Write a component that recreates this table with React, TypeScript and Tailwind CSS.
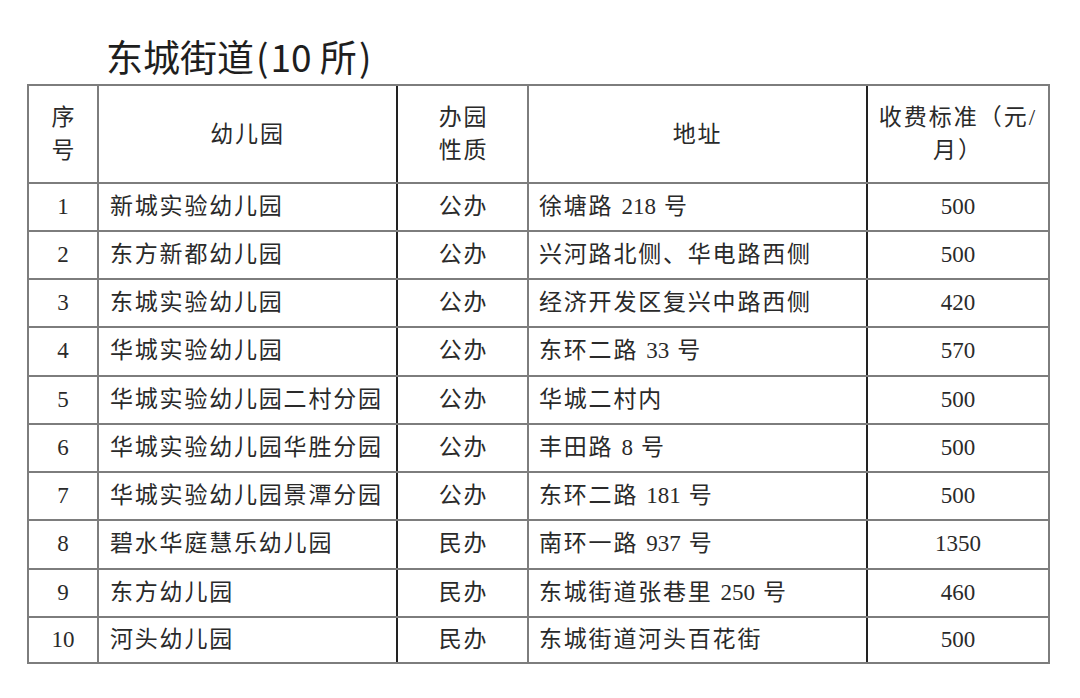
import React from "react";

type Row = { n: string; name: string; kind: string; addr: React.ReactNode; fee: string; h: string };

const D = ({ children }: { children: React.ReactNode }) => (
  <span className="tracking-normal mx-[8px]">{children}</span>
);

const rows: Row[] = [
  { n: "1", name: "新城实验幼儿园", kind: "公办", addr: <>徐塘路<D>218</D>号</>, fee: "500", h: "h-[48px]" },
  { n: "2", name: "东方新都幼儿园", kind: "公办", addr: <>兴河路北侧、华电路西侧</>, fee: "500", h: "h-[48px]" },
  { n: "3", name: "东城实验幼儿园", kind: "公办", addr: <>经济开发区复兴中路西侧</>, fee: "420", h: "h-[48px]" },
  { n: "4", name: "华城实验幼儿园", kind: "公办", addr: <>东环二路<D>33</D>号</>, fee: "570", h: "h-[49px]" },
  { n: "5", name: "华城实验幼儿园二村分园", kind: "公办", addr: <>华城二村内</>, fee: "500", h: "h-[48px]" },
  { n: "6", name: "华城实验幼儿园华胜分园", kind: "公办", addr: <>丰田路<D>8</D>号</>, fee: "500", h: "h-[48px]" },
  { n: "7", name: "华城实验幼儿园景潭分园", kind: "公办", addr: <>东环二路<D>181</D>号</>, fee: "500", h: "h-[48px]" },
  { n: "8", name: "碧水华庭慧乐幼儿园", kind: "民办", addr: <>南环一路<D>937</D>号</>, fee: "1350", h: "h-[49px]" },
  { n: "9", name: "东方幼儿园", kind: "民办", addr: <>东城街道张巷里<D>250</D>号</>, fee: "460", h: "h-[48px]" },
  { n: "10", name: "河头幼儿园", kind: "民办", addr: <>东城街道河头百花街</>, fee: "500", h: "h-[48px]" },
];

export default function App() {
  return (
    <div className="w-[1080px] h-[698px] bg-white overflow-hidden">
      <div
        className="pl-[106px] pt-[34px] h-[84px] text-[37px] leading-[44px] text-[#1e1e1e] whitespace-pre"
        style={{ fontFamily: '"Noto Sans CJK SC", "Noto Sans", sans-serif' }}
      >
        东城街道<span className="mx-[2px]">(</span>10 所<span className="ml-[2px]">)</span>
      </div>
      <div
        className="ml-[27px] w-[1023px] text-[23px] text-[#2a2a2a] tracking-[1.8px]"
        style={{ fontFamily: '"Liberation Serif", "Noto Sans CJK SC", serif' }}
      >
        <div className="flex h-[98px] border-t-2 border-[#7d7d7d] leading-[33px]">
          <div className="w-[70px] shrink-0 border-l-2 border-[#7d7d7d] flex items-center justify-center text-center pl-[2px]">
            序<br />号
          </div>
          <div className="w-[299px] shrink-0 border-l-2 border-[#7d7d7d] flex items-center justify-center">
            幼儿园
          </div>
          <div className="w-[131px] shrink-0 border-l-2 border-[#222] flex items-center justify-center text-center pl-[2px]">
            办园<br />性质
          </div>
          <div className="w-[339px] shrink-0 border-l-2 border-[#7d7d7d] flex items-center justify-center">
            地址
          </div>
          <div className="w-[184px] shrink-0 border-l-2 border-r-2 border-l-[#222] border-r-[#7d7d7d] flex items-center justify-center text-center tracking-[2px]">
            收费标准（元/<br />月）
          </div>
        </div>
        {rows.map((r, i) => (
          <div
            key={r.n}
            className={`flex ${r.h} border-t-2 border-[#7d7d7d] ${i === rows.length - 1 ? "border-b-2" : ""}`}
          >
            <div className="w-[70px] shrink-0 border-l-2 border-[#7d7d7d] flex items-center justify-center tracking-normal">
              {r.n}
            </div>
            <div className="w-[299px] shrink-0 border-l-2 border-[#7d7d7d] flex items-center pl-[11px] whitespace-nowrap">
              {r.name}
            </div>
            <div className="w-[131px] shrink-0 border-l-2 border-[#222] flex items-center justify-center pl-[2px]">
              {r.kind}
            </div>
            <div className="w-[339px] shrink-0 border-l-2 border-[#7d7d7d] flex items-center pl-[10px] whitespace-nowrap">
              <span>{r.addr}</span>
            </div>
            <div className="w-[184px] shrink-0 border-l-2 border-r-2 border-l-[#222] border-r-[#7d7d7d] flex items-center justify-center tracking-normal">
              {r.fee}
            </div>
          </div>
        ))}
      </div>
    </div>
  );
}
